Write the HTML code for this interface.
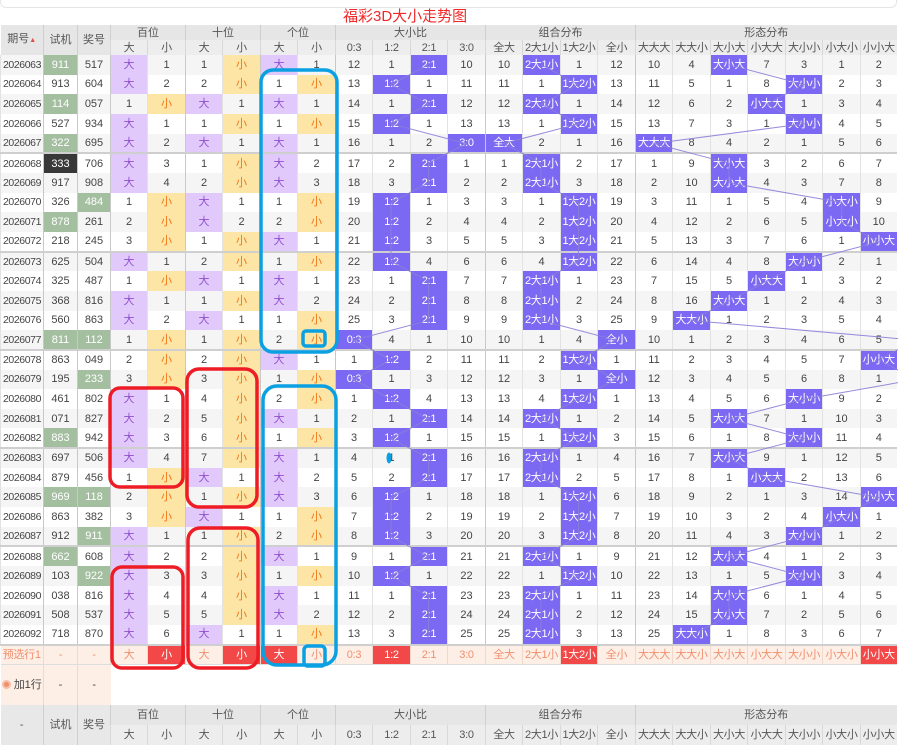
<!DOCTYPE html>
<html><head><meta charset="utf-8">
<style>
*{box-sizing:border-box;margin:0;padding:0}
body{width:898px;height:747px;overflow:hidden;background:#fff;font-family:"Liberation Sans","Noto Sans CJK SC",sans-serif;position:relative}
.card{position:absolute;left:0;top:-12px;width:897px;height:20px;border:1px solid #e6e6e6;border-radius:6px}
.title{position:absolute;left:343px;top:8px;font-size:15px;color:#f02828;font-family:"Liberation Sans","Noto Sans CJK SC",sans-serif;line-height:18px}
table{position:absolute;left:0;top:25px;width:896px;border-collapse:collapse;table-layout:fixed;font-size:11px;color:#444;text-align:center}
td{border-left:1px solid #e2e2e2;white-space:nowrap;overflow:hidden;padding:0;line-height:12px}
tr.d{height:19.667px}
tr.d td:first-child{font-size:10.5px;letter-spacing:-0.4px}
tr.d:nth-child(even) td{background:#fff}
tr.d:nth-child(odd) td{background:#f5f5f5}
tr.s td{border-bottom:2px solid #cfcfcf}
tr.d td:nth-child(1),tr.d td:nth-child(2),tr.d td:nth-child(3),tr.d td:nth-child(5),tr.d td:nth-child(7),tr.d td:nth-child(9),tr.d td:nth-child(13),tr.d td:nth-child(17){border-right:1px solid #c8c8c8}
.h1 td{background:#e6e6e6;color:#555;height:15px;border-left:1px solid #cfcfcf;font-size:11px}
.h2 td{background:#ededed;color:#555;height:15px;border-left:1px solid #d8d8d8;font-size:11px;letter-spacing:-0.3px}
tr.d td.p{background:#e2c9fb;color:#9050d0}
tr.d td.y{background:#fde5a6;color:#f07818}
tr.d td.h{background:#7b68f3;color:#fff;letter-spacing:-0.3px}
tr.d td.g{background:#a3bf9f;color:#fff}
tr.d td.k{background:#383838;color:#fff}
tr.pre td{background:#fdeee6;color:#f0906e;height:20px;border-left:1px solid #f0d8cc;border-bottom:1px solid #ddd;letter-spacing:-0.3px}
tr.pre td.r{background:#f24848;color:#fff}
tr.add td{height:40px;background:#fff;border:none}
tr.add td.pk{background:#fdeee6;border-left:1px solid #ecd8cc;color:#444}
.ic{display:inline-block;width:9px;height:9px;border-radius:50%;background:#f0906e;vertical-align:-1px;margin-right:3px;border:2px solid #f6c0a8}
.arr{color:#e05050;font-size:7px}
svg{position:absolute;left:0;top:0}
</style></head><body>
<div class="card"></div>
<div class="title">福彩3D大小走势图</div>
<table>
<colgroup><col style="width:43px"><col style="width:34px"><col style="width:33px"><col style="width:37px"><col style="width:38px"><col style="width:37px"><col style="width:38px"><col style="width:37px"><col style="width:38px"><col style="width:37px"><col style="width:38px"><col style="width:37px"><col style="width:38px"><col style="width:37px"><col style="width:38px"><col style="width:37px"><col style="width:38px"><col style="width:37px"><col style="width:38px"><col style="width:37px"><col style="width:38px"><col style="width:37px"><col style="width:38px"><col style="width:36px"></colgroup>
<tr class="h1"><td rowspan="2" style="border-left:none">期号<span class="arr">▲</span></td><td rowspan="2">试机</td><td rowspan="2">奖号</td><td colspan="2">百位</td><td colspan="2">十位</td><td colspan="2">个位</td><td colspan="4">大小比</td><td colspan="4">组合分布</td><td colspan="7">形态分布</td></tr>
<tr class="h2"><td>大</td><td>小</td><td>大</td><td>小</td><td>大</td><td>小</td><td>0:3</td><td>1:2</td><td>2:1</td><td>3:0</td><td>全大</td><td>2大1小</td><td>1大2小</td><td>全小</td><td>大大大</td><td>大大小</td><td>大小大</td><td>小大大</td><td>大小小</td><td>小大小</td><td>小小大</td></tr>
<tr class="d"><td>2026063</td><td class="g">911</td><td>517</td><td class="p">大</td><td>1</td><td>1</td><td class="y">小</td><td class="p">大</td><td>1</td><td>12</td><td>1</td><td class="h">2:1</td><td>10</td><td>10</td><td class="h">2大1小</td><td>1</td><td>12</td><td>10</td><td>4</td><td class="h">大小大</td><td>7</td><td>3</td><td>1</td><td>2</td></tr>
<tr class="d"><td>2026064</td><td>913</td><td>604</td><td class="p">大</td><td>2</td><td>2</td><td class="y">小</td><td>1</td><td class="y">小</td><td>13</td><td class="h">1:2</td><td>1</td><td>11</td><td>11</td><td>1</td><td class="h">1大2小</td><td>13</td><td>11</td><td>5</td><td>1</td><td>8</td><td class="h">大小小</td><td>2</td><td>3</td></tr>
<tr class="d"><td>2026065</td><td class="g">114</td><td>057</td><td>1</td><td class="y">小</td><td class="p">大</td><td>1</td><td class="p">大</td><td>1</td><td>14</td><td>1</td><td class="h">2:1</td><td>12</td><td>12</td><td class="h">2大1小</td><td>1</td><td>14</td><td>12</td><td>6</td><td>2</td><td class="h">小大大</td><td>1</td><td>3</td><td>4</td></tr>
<tr class="d"><td>2026066</td><td>527</td><td>934</td><td class="p">大</td><td>1</td><td>1</td><td class="y">小</td><td>1</td><td class="y">小</td><td>15</td><td class="h">1:2</td><td>1</td><td>13</td><td>13</td><td>1</td><td class="h">1大2小</td><td>15</td><td>13</td><td>7</td><td>3</td><td>1</td><td class="h">大小小</td><td>4</td><td>5</td></tr>
<tr class="d s"><td>2026067</td><td class="g">322</td><td>695</td><td class="p">大</td><td>2</td><td class="p">大</td><td>1</td><td class="p">大</td><td>1</td><td>16</td><td>1</td><td>2</td><td class="h">3:0</td><td class="h">全大</td><td>2</td><td>1</td><td>16</td><td class="h">大大大</td><td>8</td><td>4</td><td>2</td><td>1</td><td>5</td><td>6</td></tr>
<tr class="d"><td>2026068</td><td class="k">333</td><td>706</td><td class="p">大</td><td>3</td><td>1</td><td class="y">小</td><td class="p">大</td><td>2</td><td>17</td><td>2</td><td class="h">2:1</td><td>1</td><td>1</td><td class="h">2大1小</td><td>2</td><td>17</td><td>1</td><td>9</td><td class="h">大小大</td><td>3</td><td>2</td><td>6</td><td>7</td></tr>
<tr class="d"><td>2026069</td><td>917</td><td>908</td><td class="p">大</td><td>4</td><td>2</td><td class="y">小</td><td class="p">大</td><td>3</td><td>18</td><td>3</td><td class="h">2:1</td><td>2</td><td>2</td><td class="h">2大1小</td><td>3</td><td>18</td><td>2</td><td>10</td><td class="h">大小大</td><td>4</td><td>3</td><td>7</td><td>8</td></tr>
<tr class="d"><td>2026070</td><td>326</td><td class="g">484</td><td>1</td><td class="y">小</td><td class="p">大</td><td>1</td><td>1</td><td class="y">小</td><td>19</td><td class="h">1:2</td><td>1</td><td>3</td><td>3</td><td>1</td><td class="h">1大2小</td><td>19</td><td>3</td><td>11</td><td>1</td><td>5</td><td>4</td><td class="h">小大小</td><td>9</td></tr>
<tr class="d"><td>2026071</td><td class="g">878</td><td>261</td><td>2</td><td class="y">小</td><td class="p">大</td><td>2</td><td>2</td><td class="y">小</td><td>20</td><td class="h">1:2</td><td>2</td><td>4</td><td>4</td><td>2</td><td class="h">1大2小</td><td>20</td><td>4</td><td>12</td><td>2</td><td>6</td><td>5</td><td class="h">小大小</td><td>10</td></tr>
<tr class="d s"><td>2026072</td><td>218</td><td>245</td><td>3</td><td class="y">小</td><td>1</td><td class="y">小</td><td class="p">大</td><td>1</td><td>21</td><td class="h">1:2</td><td>3</td><td>5</td><td>5</td><td>3</td><td class="h">1大2小</td><td>21</td><td>5</td><td>13</td><td>3</td><td>7</td><td>6</td><td>1</td><td class="h">小小大</td></tr>
<tr class="d"><td>2026073</td><td>625</td><td>504</td><td class="p">大</td><td>1</td><td>2</td><td class="y">小</td><td>1</td><td class="y">小</td><td>22</td><td class="h">1:2</td><td>4</td><td>6</td><td>6</td><td>4</td><td class="h">1大2小</td><td>22</td><td>6</td><td>14</td><td>4</td><td>8</td><td class="h">大小小</td><td>2</td><td>1</td></tr>
<tr class="d"><td>2026074</td><td>325</td><td>487</td><td>1</td><td class="y">小</td><td class="p">大</td><td>1</td><td class="p">大</td><td>1</td><td>23</td><td>1</td><td class="h">2:1</td><td>7</td><td>7</td><td class="h">2大1小</td><td>1</td><td>23</td><td>7</td><td>15</td><td>5</td><td class="h">小大大</td><td>1</td><td>3</td><td>2</td></tr>
<tr class="d"><td>2026075</td><td>368</td><td>816</td><td class="p">大</td><td>1</td><td>1</td><td class="y">小</td><td class="p">大</td><td>2</td><td>24</td><td>2</td><td class="h">2:1</td><td>8</td><td>8</td><td class="h">2大1小</td><td>2</td><td>24</td><td>8</td><td>16</td><td class="h">大小大</td><td>1</td><td>2</td><td>4</td><td>3</td></tr>
<tr class="d"><td>2026076</td><td>560</td><td>863</td><td class="p">大</td><td>2</td><td class="p">大</td><td>1</td><td>1</td><td class="y">小</td><td>25</td><td>3</td><td class="h">2:1</td><td>9</td><td>9</td><td class="h">2大1小</td><td>3</td><td>25</td><td>9</td><td class="h">大大小</td><td>1</td><td>2</td><td>3</td><td>5</td><td>4</td></tr>
<tr class="d s"><td>2026077</td><td class="g">811</td><td class="g">112</td><td>1</td><td class="y">小</td><td>1</td><td class="y">小</td><td>2</td><td class="y">小</td><td class="h">0:3</td><td>4</td><td>1</td><td>10</td><td>10</td><td>1</td><td>4</td><td class="h">全小</td><td>10</td><td>1</td><td>2</td><td>3</td><td>4</td><td>6</td><td>5</td></tr>
<tr class="d"><td>2026078</td><td>863</td><td>049</td><td>2</td><td class="y">小</td><td>2</td><td class="y">小</td><td class="p">大</td><td>1</td><td>1</td><td class="h">1:2</td><td>2</td><td>11</td><td>11</td><td>2</td><td class="h">1大2小</td><td>1</td><td>11</td><td>2</td><td>3</td><td>4</td><td>5</td><td>7</td><td class="h">小小大</td></tr>
<tr class="d"><td>2026079</td><td>195</td><td class="g">233</td><td>3</td><td class="y">小</td><td>3</td><td class="y">小</td><td>1</td><td class="y">小</td><td class="h">0:3</td><td>1</td><td>3</td><td>12</td><td>12</td><td>3</td><td>1</td><td class="h">全小</td><td>12</td><td>3</td><td>4</td><td>5</td><td>6</td><td>8</td><td>1</td></tr>
<tr class="d"><td>2026080</td><td>461</td><td>802</td><td class="p">大</td><td>1</td><td>4</td><td class="y">小</td><td>2</td><td class="y">小</td><td>1</td><td class="h">1:2</td><td>4</td><td>13</td><td>13</td><td>4</td><td class="h">1大2小</td><td>1</td><td>13</td><td>4</td><td>5</td><td>6</td><td class="h">大小小</td><td>9</td><td>2</td></tr>
<tr class="d"><td>2026081</td><td>071</td><td>827</td><td class="p">大</td><td>2</td><td>5</td><td class="y">小</td><td class="p">大</td><td>1</td><td>2</td><td>1</td><td class="h">2:1</td><td>14</td><td>14</td><td class="h">2大1小</td><td>1</td><td>2</td><td>14</td><td>5</td><td class="h">大小大</td><td>7</td><td>1</td><td>10</td><td>3</td></tr>
<tr class="d s"><td>2026082</td><td class="g">883</td><td>942</td><td class="p">大</td><td>3</td><td>6</td><td class="y">小</td><td>1</td><td class="y">小</td><td>3</td><td class="h">1:2</td><td>1</td><td>15</td><td>15</td><td>1</td><td class="h">1大2小</td><td>3</td><td>15</td><td>6</td><td>1</td><td>8</td><td class="h">大小小</td><td>11</td><td>4</td></tr>
<tr class="d"><td>2026083</td><td>697</td><td>506</td><td class="p">大</td><td>4</td><td>7</td><td class="y">小</td><td class="p">大</td><td>1</td><td>4</td><td>1</td><td class="h">2:1</td><td>16</td><td>16</td><td class="h">2大1小</td><td>1</td><td>4</td><td>16</td><td>7</td><td class="h">大小大</td><td>9</td><td>1</td><td>12</td><td>5</td></tr>
<tr class="d"><td>2026084</td><td>879</td><td>456</td><td>1</td><td class="y">小</td><td class="p">大</td><td>1</td><td class="p">大</td><td>2</td><td>5</td><td>2</td><td class="h">2:1</td><td>17</td><td>17</td><td class="h">2大1小</td><td>2</td><td>5</td><td>17</td><td>8</td><td>1</td><td class="h">小大大</td><td>2</td><td>13</td><td>6</td></tr>
<tr class="d"><td>2026085</td><td class="g">969</td><td class="g">118</td><td>2</td><td class="y">小</td><td>1</td><td class="y">小</td><td class="p">大</td><td>3</td><td>6</td><td class="h">1:2</td><td>1</td><td>18</td><td>18</td><td>1</td><td class="h">1大2小</td><td>6</td><td>18</td><td>9</td><td>2</td><td>1</td><td>3</td><td>14</td><td class="h">小小大</td></tr>
<tr class="d"><td>2026086</td><td>863</td><td>382</td><td>3</td><td class="y">小</td><td class="p">大</td><td>1</td><td>1</td><td class="y">小</td><td>7</td><td class="h">1:2</td><td>2</td><td>19</td><td>19</td><td>2</td><td class="h">1大2小</td><td>7</td><td>19</td><td>10</td><td>3</td><td>2</td><td>4</td><td class="h">小大小</td><td>1</td></tr>
<tr class="d s"><td>2026087</td><td>912</td><td class="g">911</td><td class="p">大</td><td>1</td><td>1</td><td class="y">小</td><td>2</td><td class="y">小</td><td>8</td><td class="h">1:2</td><td>3</td><td>20</td><td>20</td><td>3</td><td class="h">1大2小</td><td>8</td><td>20</td><td>11</td><td>4</td><td>3</td><td class="h">大小小</td><td>1</td><td>2</td></tr>
<tr class="d"><td>2026088</td><td class="g">662</td><td>608</td><td class="p">大</td><td>2</td><td>2</td><td class="y">小</td><td class="p">大</td><td>1</td><td>9</td><td>1</td><td class="h">2:1</td><td>21</td><td>21</td><td class="h">2大1小</td><td>1</td><td>9</td><td>21</td><td>12</td><td class="h">大小大</td><td>4</td><td>1</td><td>2</td><td>3</td></tr>
<tr class="d"><td>2026089</td><td>103</td><td class="g">922</td><td class="p">大</td><td>3</td><td>3</td><td class="y">小</td><td>1</td><td class="y">小</td><td>10</td><td class="h">1:2</td><td>1</td><td>22</td><td>22</td><td>1</td><td class="h">1大2小</td><td>10</td><td>22</td><td>13</td><td>1</td><td>5</td><td class="h">大小小</td><td>3</td><td>4</td></tr>
<tr class="d"><td>2026090</td><td>038</td><td>816</td><td class="p">大</td><td>4</td><td>4</td><td class="y">小</td><td class="p">大</td><td>1</td><td>11</td><td>1</td><td class="h">2:1</td><td>23</td><td>23</td><td class="h">2大1小</td><td>1</td><td>11</td><td>23</td><td>14</td><td class="h">大小大</td><td>6</td><td>1</td><td>4</td><td>5</td></tr>
<tr class="d"><td>2026091</td><td>508</td><td>537</td><td class="p">大</td><td>5</td><td>5</td><td class="y">小</td><td class="p">大</td><td>2</td><td>12</td><td>2</td><td class="h">2:1</td><td>24</td><td>24</td><td class="h">2大1小</td><td>2</td><td>12</td><td>24</td><td>15</td><td class="h">大小大</td><td>7</td><td>2</td><td>5</td><td>6</td></tr>
<tr class="d s"><td>2026092</td><td>718</td><td>870</td><td class="p">大</td><td>6</td><td class="p">大</td><td>1</td><td>1</td><td class="y">小</td><td>13</td><td>3</td><td class="h">2:1</td><td>25</td><td>25</td><td class="h">2大1小</td><td>3</td><td>13</td><td>25</td><td class="h">大大小</td><td>1</td><td>8</td><td>3</td><td>6</td><td>7</td></tr>
<tr class="pre"><td style="border-left:none">预选行1</td><td>-</td><td>-</td><td>大</td><td class="r">小</td><td>大</td><td class="r">小</td><td class="r">大</td><td>小</td><td>0:3</td><td class="r">1:2</td><td>2:1</td><td>3:0</td><td>全大</td><td>2大1小</td><td class="r">1大2小</td><td>全小</td><td>大大大</td><td>大大小</td><td>大小大</td><td>小大大</td><td>大小小</td><td>小大小</td><td class="r">小小大</td></tr>
<tr class="add"><td class="pk" style="border-left:none"><span class="ic"></span>加1行</td><td class="pk">-</td><td class="pk">-</td><td colspan="21"></td></tr>
<tr class="h1" style="height:20px"><td rowspan="2" style="border-left:none;background:#e8e8e8">-</td><td rowspan="2" style="background:#e8e8e8">试机</td><td rowspan="2" style="background:#e8e8e8">奖号</td><td colspan="2">百位</td><td colspan="2">十位</td><td colspan="2">个位</td><td colspan="4">大小比</td><td colspan="4">组合分布</td><td colspan="7">形态分布</td></tr>
<tr class="h2" style="height:20px"><td>大</td><td>小</td><td>大</td><td>小</td><td>大</td><td>小</td><td>0:3</td><td>1:2</td><td>2:1</td><td>3:0</td><td>全大</td><td>2大1小</td><td>1大2小</td><td>全小</td><td>大大大</td><td>大大小</td><td>大小大</td><td>小大大</td><td>大小小</td><td>小大小</td><td>小小大</td></tr>
</table>
<svg width="898" height="747" viewBox="0 0 898 747">
<g fill="none" stroke="#8a80d8" stroke-width="1" opacity="0.9">
<polyline points="428.5,64.8 391,84.5 428.5,104.2 391,123.8 466,143.5 428.5,163.2 428.5,182.8 391,202.5 391,222.2 391,241.8 391,261.5 428.5,281.2 428.5,300.8 428.5,320.5 353.5,340.2 391,359.8 353.5,379.5 391,399.2 428.5,418.8 391,438.5 428.5,458.2 428.5,477.8 391,497.5 391,517.2 391,536.8 428.5,556.5 391,576.2 428.5,595.8 428.5,615.5 428.5,635.2"/>
<polyline points="541,64.8 578.5,84.5 541,104.2 578.5,123.8 503.5,143.5 541,163.2 541,182.8 578.5,202.5 578.5,222.2 578.5,241.8 578.5,261.5 541,281.2 541,300.8 541,320.5 616,340.2 578.5,359.8 616,379.5 578.5,399.2 541,418.8 578.5,438.5 541,458.2 541,477.8 578.5,497.5 578.5,517.2 578.5,536.8 541,556.5 578.5,576.2 541,595.8 541,615.5 541,635.2"/>
<polyline points="729,64.8 804,84.5 766.5,104.2 804,123.8 654,143.5 729,163.2 729,182.8 841.7,202.5 841.7,222.2 878.8,241.8 804,261.5 766.5,281.2 729,300.8 691.5,320.5 916,340.2 878.8,359.8 916,379.5 804,399.2 729,418.8 804,438.5 729,458.2 766.5,477.8 878.8,497.5 841.7,517.2 804,536.8 729,556.5 804,576.2 729,595.8 729,615.5 691.5,635.2"/>
</g>
<g fill="none" stroke-width="3.5">
<rect x="261" y="70" width="76" height="282" rx="12" stroke="#0aa0e2"/>
<rect x="303" y="331" width="22" height="15" rx="3" stroke="#0aa0e2"/>
<rect x="263" y="386" width="73" height="279" rx="14" stroke="#0aa0e2"/>
<rect x="304" y="646" width="21" height="20" rx="4" stroke="#0aa0e2"/>
<rect x="110" y="388" width="73" height="99" rx="10" stroke="#ee1c25"/>
<rect x="187" y="369" width="70" height="138" rx="12" stroke="#ee1c25"/>
<rect x="188" y="528" width="70" height="140" rx="12" stroke="#ee1c25"/>
<rect x="112" y="567" width="71" height="101" rx="10" stroke="#ee1c25"/>
</g>
<ellipse cx="389" cy="458" rx="2.5" ry="5.5" fill="#0aa0e2"/>
</svg>
</body></html>
